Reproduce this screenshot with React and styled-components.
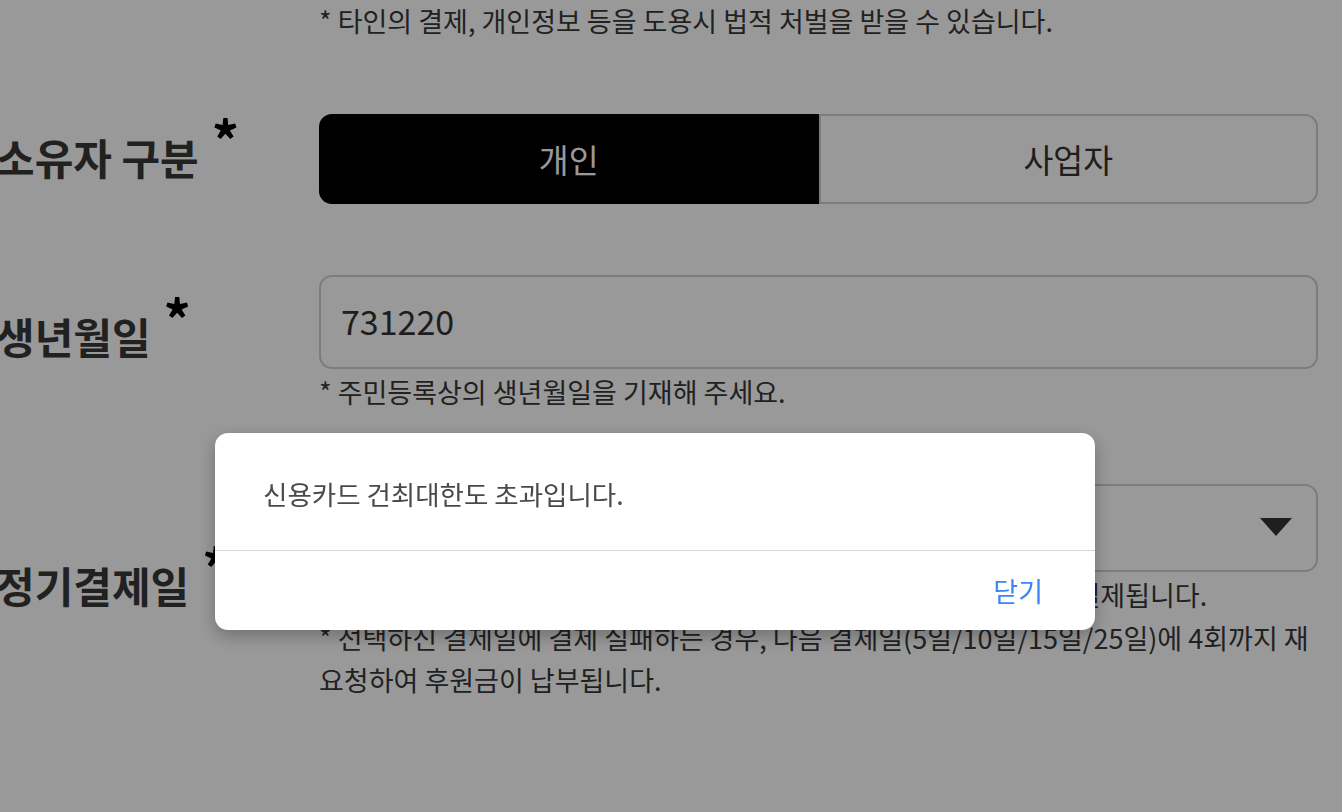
import React from "react";
import styled, { createGlobalStyle } from "styled-components";

const GlobalStyle = createGlobalStyle`
  html, body {
    margin: 0;
    padding: 0;
    background: #ffffff;
    overflow: hidden;
  }
  body {
    font-family: "Noto Sans CJK KR", "Noto Sans", sans-serif;
    color: #333333;
  }
  * { box-sizing: border-box; }
`;

const Page = styled.div`
  width: 1342px;
  height: 812px;
  overflow: hidden;
`;

const Form = styled.div`
  display: flex;
  flex-direction: column;
  gap: 71px;
  margin-left: -4px;
  margin-top: -96px;
`;

const Row = styled.div`
  display: flex;
  align-items: center;
`;

const LabelCell = styled.div`
  width: 323px;
  flex: none;
  display: flex;
  align-items: flex-start;
  padding-bottom: ${(p) => (p.$shift ? "12px" : "0")};
`;

const Label = styled.span`
  font-size: 42px;
  font-weight: 700;
  color: #383838;
  line-height: 1.2;
  white-space: nowrap;
`;

const Req = styled.span`
  margin-left: 13px;
  font-size: 54px;
  font-weight: 700;
  color: #000;
  line-height: 1;
  transform: translateY(-20px);
`;

const Field = styled.div`
  width: 999px;
  flex: none;
  display: flex;
  flex-direction: column;
`;

const Box = styled.div`
  height: ${(p) => p.$h}px;
  margin-bottom: 2px;
  border: 2px solid #cfcfcf;
  border-radius: 13px;
  display: flex;
  align-items: center;
  justify-content: space-between;
  padding: 0 24px 2px 20px;
  font-size: 34px;
  color: #333;
`;

const Hint = styled.p`
  margin: 0;
  font-size: 27px;
  line-height: 42.5px;
  color: #383838;
`;

const Toggle = styled.div`
  display: grid;
  grid-template-columns: 1fr 1fr;
  height: 90px;
`;

const ToggleOption = styled.button`
  font-family: inherit;
  font-size: 32.5px;
  border: 2px solid ${(p) => (p.$active ? "#000" : "#cfcfcf")};
  background: ${(p) => (p.$active ? "#000" : "#fff")};
  color: ${(p) => (p.$active ? "#fff" : "#333")};
  border-radius: ${(p) => (p.$active ? "13px 0 0 13px" : "0 13px 13px 0")};
  padding: 0;
  cursor: pointer;
`;

const Caret = styled.svg`
  width: 32px;
  height: 18px;
  flex: none;
`;

const Backdrop = styled.div`
  position: fixed;
  inset: 0;
  background: rgba(0, 0, 0, 0.4);
  display: flex;
  align-items: flex-start;
  padding: 433px 0 0 215px;
`;

const Dialog = styled.div`
  width: 880px;
  background: #fff;
  border-radius: 13px;
  box-shadow: 0 6px 18px rgba(0, 0, 0, 0.28);
  overflow: hidden;
`;

const Message = styled.div`
  height: 118px;
  display: flex;
  align-items: center;
  padding: 4px 48px 0;
  font-size: 26.5px;
  color: #4a4a4a;
  border-bottom: 1.5px solid #d6d6d6;
`;

const Actions = styled.div`
  height: 79px;
  display: flex;
  align-items: center;
  justify-content: flex-end;
  padding: 0 52px 0 0;
`;

const CloseButton = styled.button`
  font-family: inherit;
  font-size: 27px;
  color: #3a86f7;
  background: none;
  border: none;
  padding: 0;
  cursor: pointer;
`;

export default function App() {
  return (
    <Page>
      <GlobalStyle />
      <Form>
        <Row>
          <LabelCell />
          <Field>
            <Box $h={94} />
            <Hint>* 타인의 결제, 개인정보 등을 도용시 법적 처벌을 받을 수 있습니다.</Hint>
          </Field>
        </Row>

        <Row>
          <LabelCell>
            <Label>소유자 구분</Label>
            <Req>*</Req>
          </LabelCell>
          <Field>
            <Toggle>
              <ToggleOption $active>개인</ToggleOption>
              <ToggleOption>사업자</ToggleOption>
            </Toggle>
          </Field>
        </Row>

        <Row>
          <LabelCell $shift>
            <Label>생년월일</Label>
            <Req>*</Req>
          </LabelCell>
          <Field>
            <Box $h={94}>731220</Box>
            <Hint>* 주민등록상의 생년월일을 기재해 주세요.</Hint>
          </Field>
        </Row>

        <Row>
          <LabelCell $shift>
            <Label>정기결제일</Label>
            <Req>*</Req>
          </LabelCell>
          <Field>
            <Box $h={88}>
              <span />
              <Caret viewBox="0 0 32 18">
                <path d="M0 0 H32 L16 18 Z" fill="#333" />
              </Caret>
            </Box>
            <Hint>
              * 정기결제일은 매월 선택하신 날짜에 등록해주신 결제수단으로 자동 결제됩니다.
            </Hint>
            <Hint>
              * 선택하신 결제일에 결제 실패하는 경우, 다음 결제일(5일/10일/15일/25일)에 4회까지 재요청하여 후원금이 납부됩니다.
            </Hint>
          </Field>
        </Row>
      </Form>

      <Backdrop>
        <Dialog role="alertdialog">
          <Message>신용카드 건최대한도 초과입니다.</Message>
          <Actions>
            <CloseButton>닫기</CloseButton>
          </Actions>
        </Dialog>
      </Backdrop>
    </Page>
  );
}
